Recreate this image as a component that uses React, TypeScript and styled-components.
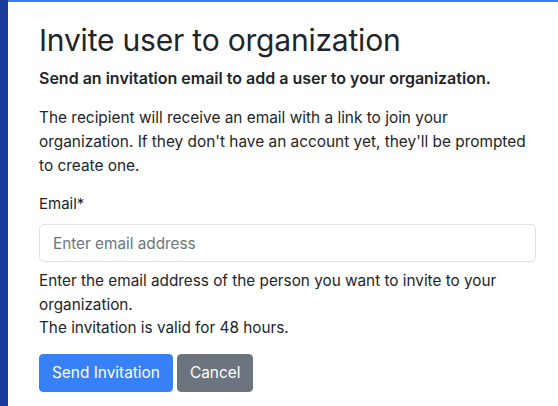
import React from "react";
import styled, { createGlobalStyle } from "styled-components";

const Global = createGlobalStyle`
  html, body { margin: 0; padding: 0; background: #fff; }
  body {
    font-family: Inter, "Noto Sans", "Liberation Sans", sans-serif;
    color: #212529;
    -webkit-font-smoothing: antialiased;
  }
  * { box-sizing: border-box; }
`;

const Shell = styled.div`
  display: flex;
  min-height: 406px;
  border-top: 2px solid #3b7ff2;
`;

const SideRail = styled.div`
  width: 8px;
  flex: none;
  background: #1a3a9c;
  margin-top: -2px;
`;

const Panel = styled.main`
  flex: 1;
  min-width: 0;
  padding: 20px 22px 0 31px;
`;

const Title = styled.h1`
  margin: 0 0 8px;
  font-size: 30px;
  line-height: 36px;
  font-weight: 400;
  letter-spacing: -0.2px;
`;

const Lead = styled.p`
  margin: 0 0 16px;
  font-size: 16px;
  line-height: 24px;
  font-weight: 600;
`;

const Body = styled.p`
  margin: 0;
  font-size: 15.4px;
  line-height: 24px;
`;

const Field = styled.div`
  display: flex;
  flex-direction: column;
  margin-top: 14px;
`;

const Label = styled.label`
  font-size: 15px;
  line-height: 24px;
  margin-bottom: 8px;
`;

const Input = styled.input`
  width: 100%;
  height: 38px;
  padding: 6px 13px;
  font: inherit;
  font-size: 15.3px;
  color: #212529;
  border: 1px solid #dee2e6;
  border-radius: 5px;
  outline: none;
  &::placeholder { color: #6c757d; }
`;

const Help = styled.div`
  margin-top: 7px;
  font-size: 15.3px;
  line-height: 23.5px;
`;

const Actions = styled.div`
  display: flex;
  gap: 4px;
  margin-top: 14px;
`;

const Button = styled.button<{ $tone: "primary" | "secondary" }>`
  height: 38px;
  padding: 0 12px;
  font: inherit;
  font-size: 15.4px;
  color: #fff;
  border-radius: 4px;
  border: 1px solid ${(p) => (p.$tone === "primary" ? "#3880f6" : "#6c757d")};
  background: ${(p) => (p.$tone === "primary" ? "#3880f6" : "#6c757d")};
  cursor: pointer;
`;

export default function App() {
  return (
    <>
      <Global />
      <Shell>
        <SideRail />
        <Panel>
          <Title>Invite user to organization</Title>
          <Lead>Send an invitation email to add a user to your organization.</Lead>
          <Body>
            The recipient will receive an email with a link to join your organization. If they
            don't have an account yet, they'll be prompted to create one.
          </Body>
          <Field>
            <Label htmlFor="invite-email">Email*</Label>
            <Input id="invite-email" type="email" placeholder="Enter email address" />
            <Help>
              Enter the email address of the person you want to invite to your organization.
              <br />
              The invitation is valid for 48 hours.
            </Help>
          </Field>
          <Actions>
            <Button $tone="primary">Send Invitation</Button>
            <Button $tone="secondary">Cancel</Button>
          </Actions>
        </Panel>
      </Shell>
    </>
  );
}
